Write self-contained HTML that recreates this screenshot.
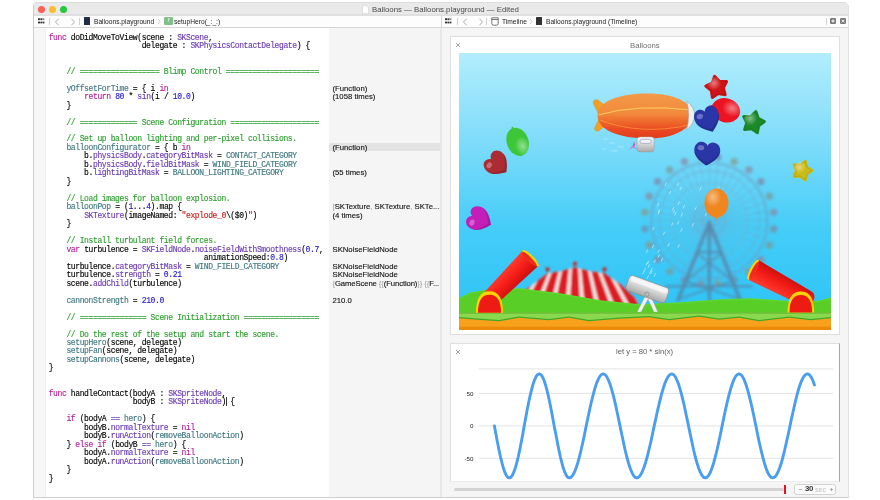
<!DOCTYPE html>
<html><head><meta charset="utf-8">
<style>
*{margin:0;padding:0;box-sizing:border-box}
html,body{width:880px;height:500px;overflow:hidden;background:#fff;position:relative;font-family:"Liberation Sans",sans-serif}
#code,#side,.tb,.a{will-change:transform}
.a{position:absolute}
i{font-style:normal}
#code{position:absolute;left:46px;top:28px;width:283px;height:469px;background:#fff;overflow:hidden}
.cl{position:absolute;left:2.7px;white-space:pre;font-family:"Liberation Mono",monospace;font-size:8.05px;letter-spacing:-0.4px;line-height:8.48px;color:#000;-webkit-text-stroke:0.14px currentColor;transform:scaleY(1.06);transform-origin:0 6.4px}
.k{color:#B4229A}.t{color:#3F7880}.p{color:#6A3AB2}.n{color:#2418D0}.c{color:#2C9E2E}.s{color:#C8201C}
#side{position:absolute;left:329px;top:28px;width:111.2px;height:469px;background:#f5f5f5;overflow:hidden}
.sl{position:absolute;left:3.5px;white-space:pre;font-size:7.72px;line-height:8.48px;color:#111;-webkit-text-stroke:0.12px currentColor}
.g{color:#aaa}
.tb{font-size:6.65px;color:#222;white-space:pre}
</style></head><body>
<!-- window frame -->
<div class="a" style="left:33px;top:2px;width:815px;height:13.6px;background:#e9e9e9;border-radius:4px 4px 0 0;border-top:1px solid #dcdcdc"></div>
<div class="a" style="left:33px;top:13.6px;width:815px;height:2px;background:#e0e0e0"></div>
<div class="a" style="left:37.9px;top:5.7px;width:7.2px;height:7.2px;border-radius:50%;background:#fc5f57"></div>
<div class="a" style="left:49.1px;top:5.7px;width:7.2px;height:7.2px;border-radius:50%;background:#fdbb2e"></div>
<div class="a" style="left:60.4px;top:5.7px;width:7.2px;height:7.2px;border-radius:50%;background:#29c73f"></div>
<svg class="a" style="left:362px;top:4.5px" width="7" height="9" viewBox="0 0 7 9"><path d="M0.5 0.5 H4.5 L6.5 2.5 V8.5 H0.5 Z" fill="#fff" stroke="#d0d0d0" stroke-width="0.6"/></svg>
<div class="a tb" style="left:372px;top:4.5px;font-size:7.81px;color:#4a4a4a;line-height:10px">Balloons — Balloons.playground — Edited</div>
<!-- toolbar -->
<div class="a" style="left:33px;top:15.6px;width:815px;height:12px;background:#fdfdfd;border-bottom:1px solid #d6d6d6"></div>
<!-- left toolbar -->
<svg class="a" style="left:37.5px;top:18px" width="7" height="6" viewBox="0 0 7 6"><g fill="#333"><rect x="0" y="0.3" width="2" height="1.8"/><rect x="2.4" y="0.3" width="2" height="1.8"/><rect x="4.8" y="0.3" width="1.6" height="1.8" opacity="0.6"/><rect x="0" y="3.6" width="2" height="1.8"/><rect x="2.4" y="3.6" width="2" height="1.8"/><rect x="4.8" y="3.6" width="1.6" height="1.8"/></g></svg>
<div class="a" style="left:48.6px;top:17.8px;width:0.8px;height:7px;background:#d0d0d0"></div>
<svg class="a" style="left:53.5px;top:17.5px" width="6" height="8" viewBox="0 0 6 8"><path d="M4.5 0.8 L1.5 4 L4.5 7.2" fill="none" stroke="#8a8a8a" stroke-width="0.7"/></svg>
<svg class="a" style="left:69.5px;top:17.5px" width="6" height="8" viewBox="0 0 6 8"><path d="M1.5 0.8 L4.5 4 L1.5 7.2" fill="none" stroke="#8a8a8a" stroke-width="0.7"/></svg>
<div class="a" style="left:78.8px;top:17.8px;width:0.8px;height:7px;background:#d0d0d0"></div>
<div class="a" style="left:84px;top:17px;width:6.4px;height:8px;background:#1f2a4d;border-radius:0.6px"></div>
<div class="a tb" style="left:94px;top:16.5px;line-height:10px">Balloons.playground</div>
<svg class="a" style="left:157px;top:18px" width="4" height="7" viewBox="0 0 4 7"><path d="M1 0.8 L3 3.5 L1 6.2" fill="none" stroke="#b0b0b0" stroke-width="0.6"/></svg>
<div class="a" style="left:163.6px;top:17.3px;width:8.6px;height:7.8px;background:#7fbf8a;border-radius:1px;color:#fff;font-size:6px;line-height:7.8px;text-align:center;font-style:italic">f</div>
<div class="a tb" style="left:174.4px;top:16.5px;line-height:10px">setupHero(_:_:)</div>
<!-- right toolbar -->
<div class="a" style="left:440.6px;top:15.6px;width:1px;height:12px;background:#d6d6d6"></div>
<svg class="a" style="left:445.1px;top:18px" width="7" height="6" viewBox="0 0 7 6"><g fill="#333"><rect x="0" y="0.3" width="2" height="1.8"/><rect x="2.4" y="0.3" width="2" height="1.8"/><rect x="4.8" y="0.3" width="1.6" height="1.8" opacity="0.6"/><rect x="0" y="3.6" width="2" height="1.8"/><rect x="2.4" y="3.6" width="2" height="1.8"/><rect x="4.8" y="3.6" width="1.6" height="1.8"/></g></svg>
<div class="a" style="left:456.6px;top:17.8px;width:0.8px;height:7px;background:#d0d0d0"></div>
<svg class="a" style="left:461.5px;top:17.5px" width="6" height="8" viewBox="0 0 6 8"><path d="M4.5 0.8 L1.5 4 L4.5 7.2" fill="none" stroke="#8a8a8a" stroke-width="0.7"/></svg>
<svg class="a" style="left:477.5px;top:17.5px" width="6" height="8" viewBox="0 0 6 8"><path d="M1.5 0.8 L4.5 4 L1.5 7.2" fill="none" stroke="#8a8a8a" stroke-width="0.7"/></svg>
<div class="a" style="left:486.2px;top:17.8px;width:0.8px;height:7px;background:#d0d0d0"></div>
<svg class="a" style="left:491px;top:17px" width="8" height="9" viewBox="0 0 8 9"><path d="M0.8 0.8 H7.2 V6.5 Q7.2 8.2 5.5 8.2 H2.5 Q0.8 8.2 0.8 6.5 Z M0.8 2.5 H7.2" fill="none" stroke="#555" stroke-width="0.8"/></svg>
<div class="a tb" style="left:502px;top:16.5px;line-height:10px">Timeline</div>
<svg class="a" style="left:528.5px;top:18px" width="4" height="7" viewBox="0 0 4 7"><path d="M1 0.8 L3 3.5 L1 6.2" fill="none" stroke="#b0b0b0" stroke-width="0.6"/></svg>
<div class="a" style="left:535.6px;top:17.3px;width:6.2px;height:8px;background:#333;border-radius:0.5px"></div>
<div class="a tb" style="left:545.5px;top:16.5px;line-height:10px">Balloons.playground (Timeline)</div>
<div class="a" style="left:826.3px;top:18px;width:0.8px;height:6.6px;background:#d0d0d0"></div>
<svg class="a" style="left:830px;top:18.4px" width="6" height="6" viewBox="0 0 6 6"><rect x="0" y="0" width="6" height="6" rx="1.2" fill="#7a7a7a"/><path d="M3 1.4 V4.6 M1.4 3 H4.6" stroke="#fff" stroke-width="1.1"/></svg>
<svg class="a" style="left:839.9px;top:18.4px" width="6" height="6" viewBox="0 0 6 6"><rect x="0" y="0" width="6" height="6" rx="1.2" fill="#7a7a7a"/><path d="M1.6 1.8 L4.4 4.2 M4.4 1.8 L1.6 4.2" stroke="#fff" stroke-width="0.9"/></svg>
<!-- editor -->
<div class="a" style="left:33px;top:5px;width:1px;height:492px;background:#cdcdcd"></div>
<div class="a" style="left:34px;top:28px;width:12px;height:469px;background:#f7f7f7;border-right:1px solid #eeeeee"></div>
<div id="code">
<div class="cl" style="top:5.70px"><i class="k">func</i> doDidMoveToView(scene : <i class="p">SKScene</i>,</div>
<div class="cl" style="top:14.18px">                     delegate : <i class="p">SKPhysicsContactDelegate</i>) {</div>
<div class="cl" style="top:22.66px"></div>
<div class="cl" style="top:31.14px"></div>
<div class="cl" style="top:39.62px">    <i class="c">// ================== Blimp Control =====================</i></div>
<div class="cl" style="top:48.10px"></div>
<div class="cl" style="top:56.58px">    <i class="t">yOffsetForTime</i> = { i <i class="k">in</i></div>
<div class="cl" style="top:65.06px">        <i class="k">return</i> <i class="n">80</i> * <i class="p">sin</i>(i / <i class="n">10.0</i>)</div>
<div class="cl" style="top:73.54px">    }</div>
<div class="cl" style="top:82.02px"></div>
<div class="cl" style="top:90.50px">    <i class="c">// ============= Scene Configuration ====================</i></div>
<div class="cl" style="top:98.98px"></div>
<div class="cl" style="top:107.46px">    <i class="c">// Set up balloon lighting and per-pixel collisions.</i></div>
<div class="cl" style="top:115.94px">    <i class="t">balloonConfigurator</i> = { b <i class="k">in</i></div>
<div class="cl" style="top:124.42px">        b.<i class="p">physicsBody</i>.<i class="p">categoryBitMask</i> = <i class="t">CONTACT_CATEGORY</i></div>
<div class="cl" style="top:132.90px">        b.<i class="p">physicsBody</i>.<i class="p">fieldBitMask</i> = <i class="t">WIND_FIELD_CATEGORY</i></div>
<div class="cl" style="top:141.38px">        b.<i class="p">lightingBitMask</i> = <i class="t">BALLOON_LIGHTING_CATEGORY</i></div>
<div class="cl" style="top:149.86px">    }</div>
<div class="cl" style="top:158.34px"></div>
<div class="cl" style="top:166.82px">    <i class="c">// Load images for balloon explosion.</i></div>
<div class="cl" style="top:175.30px">    <i class="t">balloonPop</i> = (<i class="n">1</i>...<i class="n">4</i>).map {</div>
<div class="cl" style="top:183.78px">        <i class="p">SKTexture</i>(imageNamed: <i class="s">"explode_0</i>\($0)<i class="s">"</i>)</div>
<div class="cl" style="top:192.26px">    }</div>
<div class="cl" style="top:200.74px"></div>
<div class="cl" style="top:209.22px">    <i class="c">// Install turbulant field forces.</i></div>
<div class="cl" style="top:217.70px">    <i class="k">var</i> turbulence = <i class="p">SKFieldNode</i>.<i class="p">noiseFieldWithSmoothness</i>(<i class="n">0.7</i>,</div>
<div class="cl" style="top:226.18px">                                   animationSpeed:<i class="n">0.8</i>)</div>
<div class="cl" style="top:234.66px">    turbulence.<i class="p">categoryBitMask</i> = <i class="t">WIND_FIELD_CATEGORY</i></div>
<div class="cl" style="top:243.14px">    turbulence.<i class="p">strength</i> = <i class="n">0.21</i></div>
<div class="cl" style="top:251.62px">    scene.<i class="p">addChild</i>(turbulence)</div>
<div class="cl" style="top:260.10px"></div>
<div class="cl" style="top:268.58px">    <i class="t">cannonStrength</i> = <i class="n">210.0</i></div>
<div class="cl" style="top:277.06px"></div>
<div class="cl" style="top:285.54px">    <i class="c">// =============== Scene Initialization =================</i></div>
<div class="cl" style="top:294.02px"></div>
<div class="cl" style="top:302.50px">    <i class="c">// Do the rest of the setup and start the scene.</i></div>
<div class="cl" style="top:310.98px">    <i class="t">setupHero</i>(scene, delegate)</div>
<div class="cl" style="top:319.46px">    <i class="t">setupFan</i>(scene, delegate)</div>
<div class="cl" style="top:327.94px">    <i class="t">setupCannons</i>(scene, delegate)</div>
<div class="cl" style="top:336.42px">}</div>
<div class="cl" style="top:344.90px"></div>
<div class="cl" style="top:353.38px"></div>
<div class="cl" style="top:361.86px"><i class="k">func</i> handleContact(bodyA : <i class="p">SKSpriteNode</i>,</div>
<div class="cl" style="top:370.34px">                   bodyB : <i class="p">SKSpriteNode</i>) {</div>
<div class="cl" style="top:378.82px"></div>
<div class="cl" style="top:387.30px">    <i class="k">if</i> (bodyA <i class="p">==</i> <i class="t">hero</i>) {</div>
<div class="cl" style="top:395.78px">        bodyB.<i class="p">normalTexture</i> = <i class="k">nil</i></div>
<div class="cl" style="top:404.26px">        bodyB.<i class="p">runAction</i>(<i class="t">removeBalloonAction</i>)</div>
<div class="cl" style="top:412.74px">    } <i class="k">else</i> <i class="k">if</i> (bodyB <i class="p">==</i> <i class="t">hero</i>) {</div>
<div class="cl" style="top:421.22px">        bodyA.<i class="p">normalTexture</i> = <i class="k">nil</i></div>
<div class="cl" style="top:429.70px">        bodyA.<i class="p">runAction</i>(<i class="t">removeBalloonAction</i>)</div>
<div class="cl" style="top:438.18px">    }</div>
<div class="cl" style="top:446.66px">}</div>
</div>
<div class="a" style="left:226.2px;top:397px;width:0.8px;height:8.6px;background:#333"></div>
<div id="side">
<div class="a" style="left:0;top:114.9px;width:111.2px;height:7.6px;background:#e3e3e3"></div>
<div class="sl" style="top:56.58px">(Function)</div>
<div class="sl" style="top:65.06px">(1058 times)</div>
<div class="sl" style="top:115.94px">(Function)</div>
<div class="sl" style="top:141.38px">(55 times)</div>
<div class="sl" style="top:175.30px"><i class="g">[</i>SKTexture<i class="g">,</i> SKTexture<i class="g">,</i> SKTe...</div>
<div class="sl" style="top:183.78px">(4 times)</div>
<div class="sl" style="top:217.70px">SKNoiseFieldNode</div>
<div class="sl" style="top:234.66px">SKNoiseFieldNode</div>
<div class="sl" style="top:243.14px">SKNoiseFieldNode</div>
<div class="sl" style="top:251.62px;letter-spacing:-0.12px"><i class="g">{</i>GameScene <i class="g">{{</i>(Function)<i class="g">}}</i> <i class="g">{{</i>F...</div>
<div class="sl" style="top:268.58px">210.0</div>
</div>
<div class="a" style="left:440.2px;top:28px;width:1.8px;height:469px;background:#e8e8e8"></div>
<!-- right pane -->
<div class="a" style="left:442px;top:28px;width:406px;height:469px;background:#f5f5f5"></div>
<div class="a" style="left:847.5px;top:5px;width:1px;height:492px;background:#e2e2e2"></div>
<div class="a" style="left:33px;top:496.6px;width:815.5px;height:1px;background:#cfcfcf"></div>
<!-- card 1 -->
<div class="a" style="left:450px;top:36px;width:390px;height:298.5px;background:#fff;border:1px solid #dedede"></div>
<svg class="a" style="left:454.6px;top:42px" width="6" height="6" viewBox="0 0 6 6"><path d="M1 1 L5 5 M5 1 L1 5" stroke="#8a8a8a" stroke-width="0.8"/></svg>
<div class="a" style="left:629.8px;top:40.8px;font-size:7.75px;color:#707070;line-height:10px">Balloons</div>
<svg class="a" style="left:458.5px;top:52.8px" width="372" height="277.4" viewBox="0 0 372 277.4" preserveAspectRatio="none">
<defs>
<linearGradient id="sky" x1="0" y1="0" x2="0" y2="1">
<stop offset="0" stop-color="#b2edfd"/><stop offset="0.3" stop-color="#82ddfa"/><stop offset="0.62" stop-color="#46cdf8"/><stop offset="1" stop-color="#28c2f6"/></linearGradient>
<filter id="bl" x="-20%" y="-20%" width="140%" height="140%"><feGaussianBlur stdDeviation="1.6"/></filter>
<filter id="bl2" x="-20%" y="-20%" width="140%" height="140%"><feGaussianBlur stdDeviation="1.2"/></filter>
<linearGradient id="blimp" x1="0" y1="0" x2="0" y2="1">
<stop offset="0" stop-color="#f39a48"/><stop offset="0.45" stop-color="#f28a3c"/><stop offset="0.62" stop-color="#ef6a2c"/><stop offset="0.8" stop-color="#ea4a22"/><stop offset="1" stop-color="#e23a1c"/></linearGradient>
<linearGradient id="tube" x1="0" y1="0" x2="0" y2="1">
<stop offset="0" stop-color="#ff3b2e"/><stop offset="0.6" stop-color="#f01a14"/><stop offset="1" stop-color="#c81010"/></linearGradient>
<linearGradient id="silver" x1="0" y1="0" x2="0" y2="1">
<stop offset="0" stop-color="#f8f8f8"/><stop offset="0.55" stop-color="#d0d0d0"/><stop offset="1" stop-color="#a8a8a8"/></linearGradient>
<radialGradient id="shine" cx="0.35" cy="0.3" r="0.7">
<stop offset="0" stop-color="#fff" stop-opacity="0.45"/><stop offset="0.5" stop-color="#fff" stop-opacity="0"/></radialGradient>
</defs>
<rect x="0" y="0" width="372" height="278" fill="url(#sky)"/>
<g filter="url(#bl)" opacity="0.85">
<circle cx="250.3" cy="167.7" r="58" fill="none" stroke="#6c9cc0" stroke-width="1.6"/>
<circle cx="250.3" cy="167.7" r="50" fill="none" stroke="#74a4c6" stroke-width="1.0"/>
<circle cx="250.3" cy="167.7" r="38" fill="none" stroke="#7cacca" stroke-width="0.8"/>
<circle cx="250.3" cy="167.7" r="16" fill="none" stroke="#74a4c6" stroke-width="1.1"/>
<line x1="254.3" y1="167.7" x2="308.3" y2="167.7" stroke="#74a6c8" stroke-width="0.8"/>
<line x1="254.3" y1="168.3" x2="307.6" y2="176.8" stroke="#74a6c8" stroke-width="0.8"/>
<line x1="254.1" y1="168.9" x2="305.5" y2="185.6" stroke="#74a6c8" stroke-width="0.8"/>
<line x1="253.9" y1="169.5" x2="302.0" y2="194.0" stroke="#74a6c8" stroke-width="0.8"/>
<line x1="253.5" y1="170.1" x2="297.2" y2="201.8" stroke="#74a6c8" stroke-width="0.8"/>
<line x1="253.1" y1="170.5" x2="291.3" y2="208.7" stroke="#74a6c8" stroke-width="0.8"/>
<line x1="252.7" y1="170.9" x2="284.4" y2="214.6" stroke="#74a6c8" stroke-width="0.8"/>
<line x1="252.1" y1="171.3" x2="276.6" y2="219.4" stroke="#74a6c8" stroke-width="0.8"/>
<line x1="251.5" y1="171.5" x2="268.2" y2="222.9" stroke="#74a6c8" stroke-width="0.8"/>
<line x1="250.9" y1="171.7" x2="259.4" y2="225.0" stroke="#74a6c8" stroke-width="0.8"/>
<line x1="250.3" y1="171.7" x2="250.3" y2="225.7" stroke="#74a6c8" stroke-width="0.8"/>
<line x1="249.7" y1="171.7" x2="241.2" y2="225.0" stroke="#74a6c8" stroke-width="0.8"/>
<line x1="249.1" y1="171.5" x2="232.4" y2="222.9" stroke="#74a6c8" stroke-width="0.8"/>
<line x1="248.5" y1="171.3" x2="224.0" y2="219.4" stroke="#74a6c8" stroke-width="0.8"/>
<line x1="247.9" y1="170.9" x2="216.2" y2="214.6" stroke="#74a6c8" stroke-width="0.8"/>
<line x1="247.5" y1="170.5" x2="209.3" y2="208.7" stroke="#74a6c8" stroke-width="0.8"/>
<line x1="247.1" y1="170.1" x2="203.4" y2="201.8" stroke="#74a6c8" stroke-width="0.8"/>
<line x1="246.7" y1="169.5" x2="198.6" y2="194.0" stroke="#74a6c8" stroke-width="0.8"/>
<line x1="246.5" y1="168.9" x2="195.1" y2="185.6" stroke="#74a6c8" stroke-width="0.8"/>
<line x1="246.3" y1="168.3" x2="193.0" y2="176.8" stroke="#74a6c8" stroke-width="0.8"/>
<line x1="246.3" y1="167.7" x2="192.3" y2="167.7" stroke="#74a6c8" stroke-width="0.8"/>
<line x1="246.3" y1="167.1" x2="193.0" y2="158.6" stroke="#74a6c8" stroke-width="0.8"/>
<line x1="246.5" y1="166.5" x2="195.1" y2="149.8" stroke="#74a6c8" stroke-width="0.8"/>
<line x1="246.7" y1="165.9" x2="198.6" y2="141.4" stroke="#74a6c8" stroke-width="0.8"/>
<line x1="247.1" y1="165.3" x2="203.4" y2="133.6" stroke="#74a6c8" stroke-width="0.8"/>
<line x1="247.5" y1="164.9" x2="209.3" y2="126.7" stroke="#74a6c8" stroke-width="0.8"/>
<line x1="247.9" y1="164.5" x2="216.2" y2="120.8" stroke="#74a6c8" stroke-width="0.8"/>
<line x1="248.5" y1="164.1" x2="224.0" y2="116.0" stroke="#74a6c8" stroke-width="0.8"/>
<line x1="249.1" y1="163.9" x2="232.4" y2="112.5" stroke="#74a6c8" stroke-width="0.8"/>
<line x1="249.7" y1="163.7" x2="241.2" y2="110.4" stroke="#74a6c8" stroke-width="0.8"/>
<line x1="250.3" y1="163.7" x2="250.3" y2="109.7" stroke="#74a6c8" stroke-width="0.8"/>
<line x1="250.9" y1="163.7" x2="259.4" y2="110.4" stroke="#74a6c8" stroke-width="0.8"/>
<line x1="251.5" y1="163.9" x2="268.2" y2="112.5" stroke="#74a6c8" stroke-width="0.8"/>
<line x1="252.1" y1="164.1" x2="276.6" y2="116.0" stroke="#74a6c8" stroke-width="0.8"/>
<line x1="252.7" y1="164.5" x2="284.4" y2="120.8" stroke="#74a6c8" stroke-width="0.8"/>
<line x1="253.1" y1="164.9" x2="291.3" y2="126.7" stroke="#74a6c8" stroke-width="0.8"/>
<line x1="253.5" y1="165.3" x2="297.2" y2="133.6" stroke="#74a6c8" stroke-width="0.8"/>
<line x1="253.9" y1="165.9" x2="302.0" y2="141.4" stroke="#74a6c8" stroke-width="0.8"/>
<line x1="254.1" y1="166.5" x2="305.5" y2="149.8" stroke="#74a6c8" stroke-width="0.8"/>
<line x1="254.3" y1="167.1" x2="307.6" y2="158.6" stroke="#74a6c8" stroke-width="0.8"/>
<circle cx="314.7" cy="176.1" r="3.6" fill="#7a8aa6" opacity="0.9"/>
<circle cx="310.4" cy="192.2" r="3.6" fill="#7e9a96" opacity="0.9"/>
<circle cx="301.9" cy="206.7" r="3.6" fill="#8a8aa6" opacity="0.9"/>
<circle cx="289.9" cy="218.5" r="3.6" fill="#8c9688" opacity="0.9"/>
<circle cx="275.2" cy="226.8" r="3.6" fill="#6e90b0" opacity="0.9"/>
<circle cx="258.8" cy="231.2" r="3.6" fill="#8a9a8a" opacity="0.9"/>
<circle cx="241.8" cy="231.2" r="3.6" fill="#8c8aa0" opacity="0.9"/>
<circle cx="225.4" cy="226.8" r="3.6" fill="#7a8aa6" opacity="0.9"/>
<circle cx="210.7" cy="218.5" r="3.6" fill="#7e9a96" opacity="0.9"/>
<circle cx="198.7" cy="206.7" r="3.6" fill="#8a8aa6" opacity="0.9"/>
<circle cx="190.2" cy="192.2" r="3.6" fill="#8c9688" opacity="0.9"/>
<circle cx="185.9" cy="176.1" r="3.6" fill="#6e90b0" opacity="0.9"/>
<circle cx="185.9" cy="159.3" r="3.6" fill="#8a9a8a" opacity="0.9"/>
<circle cx="190.2" cy="143.2" r="3.6" fill="#8c8aa0" opacity="0.9"/>
<circle cx="198.7" cy="128.7" r="3.6" fill="#7a8aa6" opacity="0.9"/>
<circle cx="210.7" cy="116.9" r="3.6" fill="#7e9a96" opacity="0.9"/>
<circle cx="225.4" cy="108.6" r="3.6" fill="#8a8aa6" opacity="0.9"/>
<circle cx="241.8" cy="104.2" r="3.6" fill="#8c9688" opacity="0.9"/>
<circle cx="258.8" cy="104.2" r="3.6" fill="#6e90b0" opacity="0.9"/>
<circle cx="275.2" cy="108.6" r="3.6" fill="#8a9a8a" opacity="0.9"/>
<circle cx="289.9" cy="116.9" r="3.6" fill="#8c8aa0" opacity="0.9"/>
<circle cx="301.9" cy="128.7" r="3.6" fill="#7a8aa6" opacity="0.9"/>
<circle cx="310.4" cy="143.2" r="3.6" fill="#7e9a96" opacity="0.9"/>
<circle cx="314.7" cy="159.3" r="3.6" fill="#8a8aa6" opacity="0.9"/>
<path d="M218.5 248.2 L250.3 169.7 L281.5 248.2" fill="none" stroke="#5a80a2" stroke-width="3.4"/>
<line x1="250.3" y1="167.7" x2="250.3" y2="248.2" stroke="#5a80a2" stroke-width="3"/>
<line x1="237.9" y1="199.2" x2="262.5" y2="199.2" stroke="#5a80a2" stroke-width="2"/>
<line x1="206.4" y1="233.2" x2="293.7" y2="233.2" stroke="#5a80a2" stroke-width="2"/>
<path d="M237.6 199.9 L273.7 228.1 L218.5 246.2 M262.8 199.9 L226.4 228.1 L281.5 246.2" fill="none" stroke="#5a80a2" stroke-width="1.6"/>
</g>
<g filter="url(#bl2)">
<clipPath id="tc"><path d="M63.5 239.2 L76.5 229.2 L88.5 220.2 L101.5 218.2 L116.0 214.2 L131.5 218.2 L145.5 220.2 L161.5 231.2 L178.5 247.2 L178.5 257.2 L63.5 257.2Z"/></clipPath>
<path d="M63.5 239.2 L76.5 229.2 L88.5 220.2 L101.5 218.2 L116.0 214.2 L131.5 218.2 L145.5 220.2 L161.5 231.2 L178.5 247.2 L178.5 257.2 L63.5 257.2Z" fill="#f2e2e2"/>
<g clip-path="url(#tc)">
<path d="M77.0 213.2 L83.0 213.2 L57.6 259.2 L46.4 259.2 Z" fill="#dc1c24"/>
<path d="M86.0 213.2 L92.0 213.2 L73.6 259.2 L62.4 259.2 Z" fill="#dc1c24"/>
<path d="M95.0 213.2 L101.0 213.2 L89.6 259.2 L78.4 259.2 Z" fill="#dc1c24"/>
<path d="M104.0 213.2 L110.0 213.2 L105.6 259.2 L94.4 259.2 Z" fill="#dc1c24"/>
<path d="M113.0 213.2 L119.0 213.2 L121.6 259.2 L110.4 259.2 Z" fill="#dc1c24"/>
<path d="M122.0 213.2 L128.0 213.2 L137.6 259.2 L126.4 259.2 Z" fill="#dc1c24"/>
<path d="M131.0 213.2 L137.0 213.2 L153.6 259.2 L142.4 259.2 Z" fill="#dc1c24"/>
<path d="M140.0 213.2 L146.0 213.2 L169.6 259.2 L158.4 259.2 Z" fill="#dc1c24"/>
<path d="M149.0 213.2 L155.0 213.2 L185.6 259.2 L174.4 259.2 Z" fill="#dc1c24"/>
</g>
<line x1="88.5" y1="216.2" x2="88.5" y2="221.2" stroke="#a04040" stroke-width="0.8"/>
<circle cx="88.5" cy="216.2" r="2.2" fill="#b83a3a"/>
<line x1="116.0" y1="210.7" x2="116.0" y2="215.7" stroke="#a04040" stroke-width="0.8"/>
<circle cx="116.0" cy="210.7" r="2.2" fill="#b83a3a"/>
<line x1="145.5" y1="216.2" x2="145.5" y2="221.2" stroke="#a04040" stroke-width="0.8"/>
<circle cx="145.5" cy="216.2" r="2.2" fill="#b83a3a"/>
</g>
<path d="M-0.5 245.2 L11.5 239.2 L31.5 236.2 L61.5 235.2 L101.5 240.2 L141.5 247.2 L181.5 251.2 L221.5 249.2 L261.5 246.2 L291.5 245.2 L321.5 247.2 L346.5 249.2 L361.5 247.2 L372.5 244.2 L372.5 260.2 L-0.5 260.2Z" fill="#5ed62c"/>
<path d="M-0.5 246.7 L11.5 240.7 L31.5 237.7 L61.5 236.7 L101.5 241.7 L141.5 248.7 L181.5 252.7 L221.5 250.7 L261.5 247.7 L291.5 246.7 L321.5 248.7 L346.5 250.7 L361.5 248.7 L372.5 245.7 L372 262 L0 262 Z" fill="#50c020" opacity="0.35"/>
<g stroke="#e8f8ff" stroke-width="0.8" opacity="0.75" stroke-linecap="round">
<line x1="193.4" y1="195.0" x2="194.6" y2="192.4"/>
<line x1="191.9" y1="220.6" x2="193.1" y2="218.0"/>
<line x1="190.6" y1="220.7" x2="191.8" y2="218.1"/>
<line x1="193.7" y1="176.8" x2="194.9" y2="174.2"/>
<line x1="221.8" y1="178.3" x2="223.0" y2="175.7"/>
<line x1="202.3" y1="208.1" x2="203.5" y2="205.5"/>
<line x1="212.7" y1="172.4" x2="213.9" y2="169.8"/>
<line x1="195.2" y1="223.1" x2="196.4" y2="220.5"/>
<line x1="187.1" y1="212.1" x2="188.3" y2="209.5"/>
<line x1="210.5" y1="140.9" x2="211.7" y2="138.3"/>
<line x1="214.3" y1="159.6" x2="215.5" y2="157.0"/>
<line x1="183.8" y1="220.9" x2="185.0" y2="218.3"/>
<line x1="219.1" y1="151.4" x2="220.3" y2="148.8"/>
<line x1="215.7" y1="162.0" x2="216.9" y2="159.4"/>
<line x1="240.7" y1="137.2" x2="241.9" y2="134.6"/>
<line x1="218.5" y1="171.2" x2="219.7" y2="168.6"/>
<line x1="213.6" y1="157.0" x2="214.8" y2="154.4"/>
<line x1="192.1" y1="217.7" x2="193.3" y2="215.1"/>
<line x1="195.2" y1="209.6" x2="196.4" y2="207.0"/>
<line x1="236.0" y1="156.8" x2="237.2" y2="154.2"/>
<line x1="221.0" y1="136.7" x2="222.2" y2="134.1"/>
<line x1="222.2" y1="163.2" x2="223.4" y2="160.6"/>
<line x1="258.9" y1="136.3" x2="260.1" y2="133.7"/>
<line x1="199.3" y1="159.3" x2="200.5" y2="156.7"/>
<line x1="246.2" y1="162.9" x2="247.4" y2="160.3"/>
<line x1="199.0" y1="199.4" x2="200.2" y2="196.8"/>
<line x1="188.2" y1="225.4" x2="189.4" y2="222.8"/>
<line x1="185.2" y1="217.9" x2="186.4" y2="215.3"/>
<line x1="189.2" y1="214.3" x2="190.4" y2="211.7"/>
<line x1="205.9" y1="132.4" x2="207.1" y2="129.8"/>
<line x1="233.3" y1="173.1" x2="234.5" y2="170.5"/>
<line x1="218.3" y1="132.5" x2="219.5" y2="129.9"/>
<line x1="219.0" y1="194.3" x2="220.2" y2="191.7"/>
<line x1="188.5" y1="210.9" x2="189.7" y2="208.3"/>
<line x1="199.2" y1="204.2" x2="200.4" y2="201.6"/>
<line x1="187.4" y1="199.6" x2="188.6" y2="197.0"/>
<line x1="209.0" y1="193.2" x2="210.2" y2="190.6"/>
<line x1="224.2" y1="155.1" x2="225.4" y2="152.5"/>
<line x1="199.2" y1="161.1" x2="200.4" y2="158.5"/>
<line x1="250.1" y1="148.7" x2="251.3" y2="146.1"/>
<line x1="204.3" y1="181.8" x2="205.5" y2="179.2"/>
<line x1="198.6" y1="152.9" x2="199.8" y2="150.3"/>
</g>
<g transform="translate(188.0 237.2)">
<path d="M-1 4 L-10 22 L-6 22 L1 9 L7 22 L11 22 L3 4 Z" fill="#f2f2f2" stroke="#9a9a9a" stroke-width="0.5"/>
<g transform="rotate(20)"><rect x="-21" y="-9" width="42" height="16" rx="4" fill="url(#silver)" stroke="#8a8a8a" stroke-width="0.6"/><rect x="-19" y="-7" width="38" height="4" rx="2" fill="#fff" opacity="0.6"/></g>
<circle cx="0" cy="4" r="2.2" fill="#bbb" stroke="#777" stroke-width="0.5"/>
</g>
<rect x="0" y="259.4" width="372" height="9" fill="#8ad84e"/>
<rect x="0" y="259.4" width="372" height="1.2" fill="#62b830"/>
<path d="M0 268.4 L0.0 263.9 L18.0 265.4 L40.0 266.9 L60.0 263.4 L90.0 265.9 L110.0 263.4 L130.0 266.9 L160.0 264.4 L190.0 262.9 L210.0 265.9 L240.0 262.4 L260.0 265.4 L280.0 263.4 L300.0 266.9 L330.0 263.4 L352.0 265.9 L372.0 263.9 L372 278 L0 278 Z" fill="#3fa82a"/>
<path d="M0 278 L0.0 265.2 L18.0 266.7 L40.0 268.2 L60.0 264.7 L90.0 267.2 L110.0 264.7 L130.0 268.2 L160.0 265.7 L190.0 264.2 L210.0 267.2 L240.0 263.7 L260.0 266.7 L280.0 264.7 L300.0 268.2 L330.0 264.7 L352.0 267.2 L372.0 265.2 L372 278 Z" fill="#f7a21a"/>
<rect x="0" y="273.6" width="372" height="4.4" fill="#ec8a0c"/>
<g transform="translate(33.5 243.2) rotate(-45.0)">
<path d="M-4 -8.5 L53.7 -11 L53.7 11 L-4 8.5 Q-12 8.5 -12 0 Q-12 -8.5 -4 -8.5Z" fill="url(#tube)"/>
<path d="M53.7 -11 L53.7 11 L53.7 11 L53.7 -11Z" fill="#c81010" opacity="0"/>
<ellipse cx="53.7" cy="0" rx="3" ry="11.2" fill="#ffd400"/>
<ellipse cx="52.5" cy="0" rx="2" ry="10" fill="#ee2a1a"/>
</g>
<path d="M17.0 259.7 Q17.0 238.2 30.5 238.2 Q44.0 238.2 44.0 259.7 Z" fill="#ffd400"/>
<path d="M19.0 259.7 Q19.0 241.7 30.5 241.7 Q42.0 241.7 42.0 259.7 Z" fill="#ee1a14"/>
<g transform="translate(343.5 243.2) rotate(-151.8)">
<path d="M-4 -8.5 L56.1 -11 L56.1 11 L-4 8.5 Q-12 8.5 -12 0 Q-12 -8.5 -4 -8.5Z" fill="url(#tube)"/>
<path d="M56.1 -11 L56.1 11 L56.1 11 L56.1 -11Z" fill="#c81010" opacity="0"/>
<ellipse cx="56.1" cy="0" rx="3" ry="11.2" fill="#ffd400"/>
<ellipse cx="54.9" cy="0" rx="2" ry="10" fill="#ee2a1a"/>
</g>
<path d="M328.5 259.5 Q328.5 238.5 341.8 238.5 Q355.1 238.5 355.1 259.5 Z" fill="#ffd400"/>
<path d="M330.5 259.5 Q330.5 242.0 341.8 242.0 Q353.1 242.0 353.1 259.5 Z" fill="#ee1a14"/>
<g transform="translate(186.6 62.9)">
<path d="M-40 -10 L-48 -16 Q-53 -17 -52 -12 L-47 -2 Z" fill="#f2a024" stroke="#dc8a1a" stroke-width="0.5"/>
<path d="M-40 9 L-47 15 Q-51 16 -51 12 L-47 4 Z" fill="#f2a024" stroke="#dc8a1a" stroke-width="0.5"/>
<path d="M-48 0 C-48 -16 -24 -22.5 2 -22.5 C28 -22.5 46 -14 47 -2 C47 12 30 22.5 2 22.5 C-26 22.5 -48 14 -48 0Z" fill="url(#blimp)"/>
<path d="M-47 -1 Q-10 -12 46 -6" fill="none" stroke="#ffd060" stroke-width="1"/>
<path d="M-46 4 Q-5 20 44 9" fill="none" stroke="#ffb040" stroke-width="0.7" opacity="0.8"/>
<path d="M41 -15 Q49 -9 49 -1 Q49 8 41 14 Q45 -1 41 -15Z" fill="#eeeeee" stroke="#a0a0a0" stroke-width="0.6"/>
<rect x="-8.6" y="21" width="17.2" height="15" rx="3" fill="url(#silver)" stroke="#999" stroke-width="0.5"/>
<rect x="-5.5" y="23.5" width="11" height="4" rx="1.8" fill="#f4f4ff" stroke="#7a80a0" stroke-width="0.5"/>
<path d="M-13 30 L-11.5 25 L-10.5 30 Z M-13 30 L-17 34 L-12.5 31 Z M-12.5 30 L-8.5 33 L-12.5 31.5Z" fill="#e050b0"/>
<g stroke="#e8f8ff" stroke-width="0.6" opacity="0.7"><line x1="-42" y1="23" x2="-38" y2="23"/><line x1="-36" y1="27" x2="-31" y2="27"/><line x1="-28" y1="31" x2="-22" y2="31"/><line x1="-44" y1="33" x2="-40" y2="33"/><line x1="-34" y1="35" x2="-28" y2="35"/></g>
</g>
<g transform="translate(58.6 88.8) rotate(160.0)"><ellipse cx="0" cy="0" rx="10.8" ry="14.5" fill="#3cc638"/><path d="M-1.5 14.0 L1.5 14.0 L0 16.5 Z" fill="#3cc638"/><ellipse cx="0" cy="0" rx="10.8" ry="14.5" fill="url(#shine)"/></g>
<g transform="translate(38.7 111.6) rotate(-50.0) scale(1.200 1.200)"><path d="M0 9.5 C-3 7.5 -10 3 -10 -3 C-10 -7.8 -7.2 -10 -4.6 -10 C-2.2 -10 -0.5 -8.5 0 -7 C0.5 -8.5 2.2 -10 4.6 -10 C7.2 -10 10 -7.8 10 -3 C10 3 3 7.5 0 9.5Z" fill="#ac2c34"/><path d="M0 9.5 C-3 7.5 -10 3 -10 -3 C-10 -1 -6 4 0 7 C6 4 10 -1 10 -3 C10 3 3 7.5 0 9.5Z" fill="#000" opacity="0.15"/><ellipse cx="-5" cy="-5" rx="2.6" ry="2" fill="#fff" opacity="0.3"/></g>
<g transform="translate(21.2 166.8) rotate(-65.0) scale(1.200 1.250)"><path d="M0 9.5 C-3 7.5 -10 3 -10 -3 C-10 -7.8 -7.2 -10 -4.6 -10 C-2.2 -10 -0.5 -8.5 0 -7 C0.5 -8.5 2.2 -10 4.6 -10 C7.2 -10 10 -7.8 10 -3 C10 3 3 7.5 0 9.5Z" fill="#c41eb8"/><path d="M0 9.5 C-3 7.5 -10 3 -10 -3 C-10 -1 -6 4 0 7 C6 4 10 -1 10 -3 C10 3 3 7.5 0 9.5Z" fill="#000" opacity="0.15"/><ellipse cx="-5" cy="-5" rx="2.6" ry="2" fill="#fff" opacity="0.3"/></g>
<path d="M255.6 23.3 L260.5 28.3 L267.6 28.6 L264.4 34.9 L266.2 41.7 L259.3 40.6 L253.4 44.4 L252.3 37.5 L246.8 33.0 L253.1 29.9 Z" fill="#d01418" stroke="#d01418" stroke-width="3" stroke-linejoin="round"/><path d="M255.6 23.3 L260.5 28.3 L267.6 28.6 L264.4 34.9 L266.2 41.7 L259.3 40.6 L253.4 44.4 L252.3 37.5 L246.8 33.0 L253.1 29.9 Z" fill="none" stroke="#000" stroke-opacity="0.18" stroke-width="0.6" stroke-linejoin="round" transform="translate(0.0 0.0) scale(1.0)"/><circle cx="257.9" cy="34.2" r="10.4" fill="url(#shine)"/>
<g transform="translate(266.7 57.3) rotate(105.0)"><ellipse cx="0" cy="0" rx="12.0" ry="14.5" fill="#ec1420"/><path d="M-1.5 14.0 L1.5 14.0 L0 16.5 Z" fill="#ec1420"/><ellipse cx="0" cy="0" rx="12.0" ry="14.5" fill="url(#shine)"/></g>
<g transform="translate(249.1 67.2) rotate(-22.0) scale(1.250 1.300)"><path d="M0 9.5 C-3 7.5 -10 3 -10 -3 C-10 -7.8 -7.2 -10 -4.6 -10 C-2.2 -10 -0.5 -8.5 0 -7 C0.5 -8.5 2.2 -10 4.6 -10 C7.2 -10 10 -7.8 10 -3 C10 3 3 7.5 0 9.5Z" fill="#2a36a8"/><path d="M0 9.5 C-3 7.5 -10 3 -10 -3 C-10 -1 -6 4 0 7 C6 4 10 -1 10 -3 C10 3 3 7.5 0 9.5Z" fill="#000" opacity="0.15"/><ellipse cx="-5" cy="-5" rx="2.6" ry="2" fill="#fff" opacity="0.3"/></g>
<path d="M296.9 58.6 L299.2 65.2 L305.4 68.6 L299.7 72.8 L298.4 79.8 L292.6 75.7 L285.6 76.6 L287.7 69.9 L284.7 63.5 L291.8 63.4 Z" fill="#1c8a2a" stroke="#1c8a2a" stroke-width="3" stroke-linejoin="round"/><path d="M296.9 58.6 L299.2 65.2 L305.4 68.6 L299.7 72.8 L298.4 79.8 L292.6 75.7 L285.6 76.6 L287.7 69.9 L284.7 63.5 L291.8 63.4 Z" fill="none" stroke="#000" stroke-opacity="0.18" stroke-width="0.6" stroke-linejoin="round" transform="translate(0.0 0.0) scale(1.0)"/><circle cx="294.2" cy="69.4" r="10.4" fill="url(#shine)"/>
<g transform="translate(248.0 101.2) rotate(4.0) scale(1.300 1.200)"><path d="M0 9.5 C-3 7.5 -10 3 -10 -3 C-10 -7.8 -7.2 -10 -4.6 -10 C-2.2 -10 -0.5 -8.5 0 -7 C0.5 -8.5 2.2 -10 4.6 -10 C7.2 -10 10 -7.8 10 -3 C10 3 3 7.5 0 9.5Z" fill="#2a36a8"/><path d="M0 9.5 C-3 7.5 -10 3 -10 -3 C-10 -1 -6 4 0 7 C6 4 10 -1 10 -3 C10 3 3 7.5 0 9.5Z" fill="#000" opacity="0.15"/><ellipse cx="-5" cy="-5" rx="2.6" ry="2" fill="#fff" opacity="0.3"/></g>
<path d="M346.2 108.2 L347.8 114.2 L353.0 117.6 L347.8 121.0 L346.2 127.0 L341.3 123.1 L335.1 123.4 L337.4 117.6 L335.1 111.8 L341.3 112.1 Z" fill="#ccbc18" stroke="#ccbc18" stroke-width="3" stroke-linejoin="round"/><path d="M346.2 108.2 L347.8 114.2 L353.0 117.6 L347.8 121.0 L346.2 127.0 L341.3 123.1 L335.1 123.4 L337.4 117.6 L335.1 111.8 L341.3 112.1 Z" fill="none" stroke="#000" stroke-opacity="0.18" stroke-width="0.6" stroke-linejoin="round" transform="translate(0.0 0.0) scale(1.0)"/><circle cx="343.1" cy="117.6" r="9.2" fill="url(#shine)"/>
<g transform="translate(257.5 149.9) rotate(0.0)"><ellipse cx="0" cy="0" rx="12.0" ry="14.5" fill="#f0861e"/><path d="M-1.5 14.0 L1.5 14.0 L0 16.5 Z" fill="#f0861e"/><ellipse cx="0" cy="0" rx="12.0" ry="14.5" fill="url(#shine)"/></g>
</svg>
<!-- card 2 -->
<div class="a" style="left:450px;top:343px;width:390px;height:138.5px;background:#fff;border:1px solid #dedede;border-bottom-color:#ededed;border-right:1px solid #f08a7a"></div>
<svg class="a" style="left:454.6px;top:348.6px" width="6" height="6" viewBox="0 0 6 6"><path d="M1 1 L5 5 M5 1 L1 5" stroke="#8a8a8a" stroke-width="0.8"/></svg>
<div class="a" style="left:615.7px;top:347.4px;font-size:7.65px;color:#606060;line-height:10px">let y = 80 * sin(x)</div>
<svg class="a" style="left:450px;top:343px" width="390" height="139" viewBox="0 0 390 139">
<g stroke="#e4e4e4" stroke-width="1">
<line x1="28.6" y1="25.9" x2="383" y2="25.9"/>
<line x1="28.6" y1="50.4" x2="383" y2="50.4"/>
<line x1="28.6" y1="82.9" x2="383" y2="82.9"/>
<line x1="28.6" y1="115.4" x2="383" y2="115.4"/>
</g>
<g font-family="Liberation Sans" font-size="6.2" fill="#222" text-anchor="end">
<text x="23.5" y="52.8">50</text>
<text x="23.5" y="85.3">0</text>
<text x="23.5" y="117.8">-50</text>
</g>
<path d="M44.4 82.9 L45.9 91.0 L47.4 99.0 L48.9 106.5 L50.4 113.5 L51.9 119.7 L53.3 125.0 L54.8 129.2 L56.3 132.4 L57.8 134.3 L59.3 134.9 L60.8 134.3 L62.3 132.4 L63.8 129.2 L65.3 125.0 L66.8 119.7 L68.3 113.5 L69.8 106.5 L71.3 99.0 L72.8 91.0 L74.2 82.9 L75.7 74.8 L77.2 66.8 L78.7 59.3 L80.2 52.3 L81.7 46.1 L83.2 40.8 L84.7 36.6 L86.2 33.4 L87.7 31.5 L89.2 30.9 L90.7 31.5 L92.2 33.4 L93.7 36.6 L95.2 40.8 L96.7 46.1 L98.2 52.3 L99.7 59.3 L101.2 66.8 L102.7 74.8 L104.2 82.9 L105.8 91.0 L107.3 99.0 L108.8 106.5 L110.3 113.5 L111.8 119.7 L113.3 125.0 L114.8 129.2 L116.3 132.4 L117.8 134.3 L119.3 134.9 L121.0 134.3 L122.7 132.4 L124.4 129.2 L126.1 125.0 L127.8 119.7 L129.5 113.5 L131.2 106.5 L132.9 99.0 L134.6 91.0 L136.2 82.9 L137.9 74.8 L139.6 66.8 L141.3 59.3 L143.0 52.3 L144.7 46.1 L146.4 40.8 L148.1 36.6 L149.8 33.4 L151.5 31.5 L153.2 30.9 L154.9 31.5 L156.6 33.4 L158.2 36.6 L159.9 40.8 L161.6 46.1 L163.3 52.3 L165.0 59.3 L166.6 66.8 L168.3 74.8 L170.0 82.9 L171.7 91.0 L173.4 99.0 L175.0 106.5 L176.7 113.5 L178.4 119.7 L180.1 125.0 L181.8 129.2 L183.4 132.4 L185.1 134.3 L186.8 134.9 L188.5 134.3 L190.3 132.4 L192.0 129.2 L193.8 125.0 L195.5 119.7 L197.3 113.5 L199.0 106.5 L200.8 99.0 L202.5 91.0 L204.2 82.9 L206.0 74.8 L207.7 66.8 L209.5 59.3 L211.2 52.3 L213.0 46.1 L214.7 40.8 L216.5 36.6 L218.2 33.4 L220.0 31.5 L221.7 30.9 L223.4 31.5 L225.1 33.4 L226.7 36.6 L228.4 40.8 L230.1 46.1 L231.8 52.3 L233.5 59.3 L235.1 66.8 L236.8 74.8 L238.5 82.9 L240.2 91.0 L241.9 99.0 L243.5 106.5 L245.2 113.5 L246.9 119.7 L248.6 125.0 L250.3 129.2 L251.9 132.4 L253.6 134.3 L255.3 134.9 L257.0 134.3 L258.7 132.4 L260.4 129.2 L262.0 125.0 L263.7 119.7 L265.4 113.5 L267.1 106.5 L268.8 99.0 L270.5 91.0 L272.1 82.9 L273.8 74.8 L275.5 66.8 L277.2 59.3 L278.9 52.3 L280.6 46.1 L282.3 40.8 L283.9 36.6 L285.6 33.4 L287.3 31.5 L289.0 30.9 L290.7 31.5 L292.4 33.4 L294.1 36.6 L295.7 40.8 L297.4 46.1 L299.1 52.3 L300.8 59.3 L302.5 66.8 L304.2 74.8 L305.9 82.9 L307.5 91.0 L309.2 99.0 L310.9 106.5 L312.6 113.5 L314.3 119.7 L316.0 125.0 L317.6 129.2 L319.3 132.4 L321.0 134.3 L322.7 134.9 L324.4 134.3 L326.2 132.4 L327.9 129.2 L329.6 125.0 L331.4 119.7 L333.1 113.5 L334.8 106.5 L336.5 99.0 L338.3 91.0 L340.0 82.9 L341.7 74.8 L343.5 66.8 L345.2 59.3 L346.9 52.3 L348.6 46.1 L350.4 40.8 L352.1 36.6 L353.8 33.4 L355.6 31.5 L357.3 30.9 L358.2 31.1 L359.1 31.6 L360.0 32.5 L360.9 33.8 L361.8 35.3 L362.7 37.2 L363.6 39.5 L364.5 42.0" fill="none" stroke="#4a9eee" stroke-width="2.9" stroke-linecap="round" stroke-linejoin="round"/>
</svg>
<!-- slider -->
<div class="a" style="left:453.6px;top:487.6px;width:330px;height:3px;background:#d3d3d3;border-radius:1.5px"></div>
<div class="a" style="left:784px;top:485px;width:2.2px;height:8.6px;background:#e0141e"></div>
<div class="a" style="left:794.4px;top:483.6px;width:42px;height:11px;border:1px solid #d2d2d2;border-radius:2.5px;background:#fbfbfb"></div>
<div class="a" style="left:798.6px;top:488.8px;width:2.6px;height:0.8px;background:#b0b0b0"></div>
<div class="a" style="left:805.2px;top:484.2px;font-size:7.8px;color:#333;line-height:10px;font-weight:bold;letter-spacing:-0.35px">30</div>
<div class="a" style="left:815px;top:484.8px;font-size:7px;color:#c0c0c0;line-height:10px">sec</div>
<div class="a" style="left:830.2px;top:488.7px;width:3px;height:0.8px;background:#a8a8a8"></div>
<div class="a" style="left:831.3px;top:487.6px;width:0.8px;height:3px;background:#a8a8a8"></div>
</body></html>
